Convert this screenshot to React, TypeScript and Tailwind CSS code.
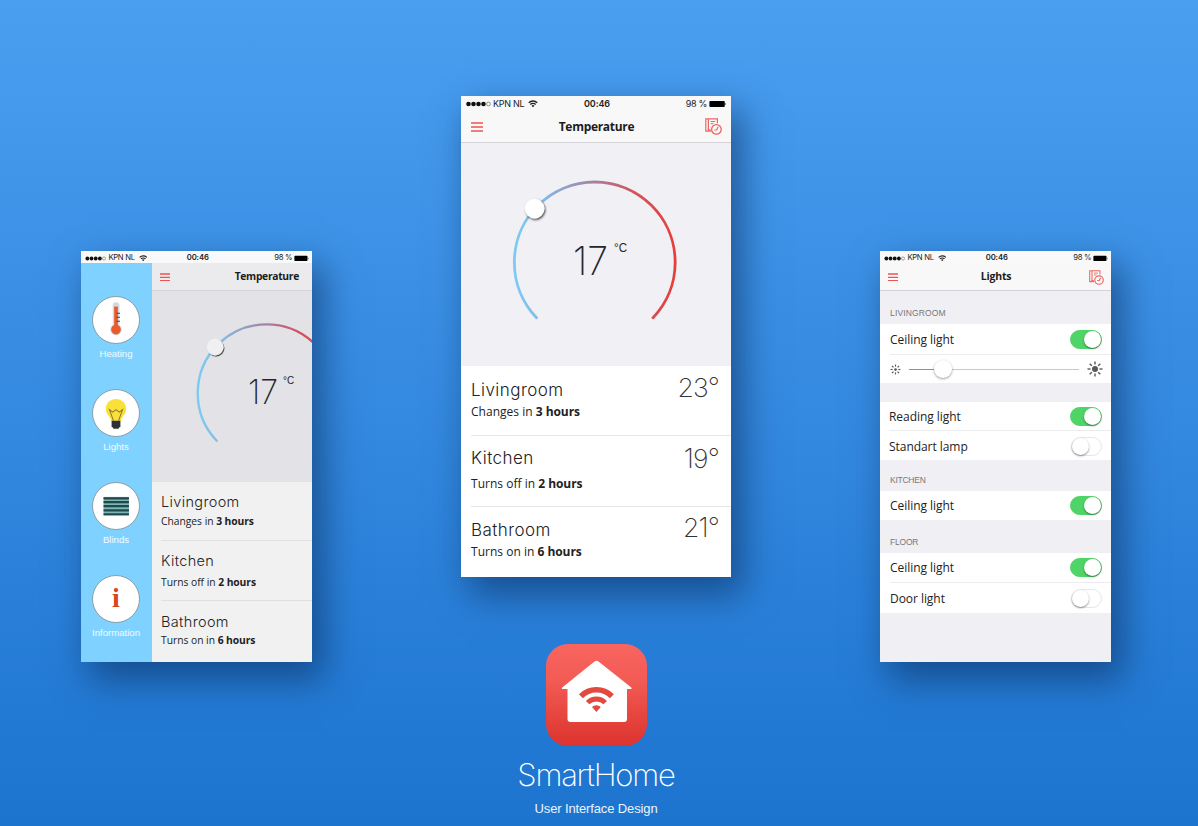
import React from "react";

const ui = "font-[Inter,'Liberation_Sans',sans-serif]";
const humanist = "font-['Open_Sans','Noto_Sans',sans-serif]";

function Wifi({ className }: { className: string }) {
  return (
    <svg viewBox="0 0 20 15" className={className} fill="none" stroke="#222">
      <path d="M1.5 5.5a12 12 0 0 1 17 0" strokeWidth="2.6" />
      <path d="M4.6 9a7.6 7.6 0 0 1 10.8 0" strokeWidth="2.6" />
      <path d="M10 14.5 7 11.3a4.3 4.3 0 0 1 6 0Z" fill="#222" stroke="none" />
    </svg>
  );
}

function StatusBar({ large = false }: { large?: boolean }) {
  return (
    <div
      className={`${ui} grid shrink-0 grid-cols-[1fr_auto_1fr] items-center text-[#222] ${
        large
          ? "h-[15px] pr-[4px] pl-[5px] text-[9px] leading-[15px]"
          : "h-[12px] bg-[#f9f9fa] pt-[2px] pr-[3px] pl-[4px] text-[7.7px] leading-[10px]"
      }`}
    >
      <div className="flex items-center">
        <svg viewBox="0 0 25 6" className={large ? "h-[6px] w-[25px]" : "h-[5px] w-[21.4px]"}>
          {[2.5, 7.5, 12.5, 17.5].map((x) => (
            <circle key={x} cx={x} cy="3" r="2.3" fill="#111" />
          ))}
          <circle cx="22.5" cy="3" r="1.9" fill="none" stroke="#555" strokeWidth=".6" />
        </svg>
        <span className={large ? "ml-[2px] tracking-[-0.3px]" : "ml-[2px] tracking-[-0.3px]"}>KPN NL</span>
        <Wifi className={large ? "ml-[4px] h-[7.5px] w-[10px]" : "ml-[4px] h-[6.5px] w-[8.5px]"} />
      </div>
      <span className={large ? "pl-[1px] font-semibold tracking-[-0.1px]" : "pl-[1.5px] font-semibold tracking-[-0.1px]"}>
        00:46
      </span>
      <div className="flex items-center justify-end">
        <span className={large ? "mr-[2px] tracking-[-0.3px]" : "mr-[1.5px] tracking-[-0.35px]"}>98 %</span>
        <svg viewBox="0 0 18 8" className={large ? "h-[8px] w-[18px]" : "h-[6.8px] w-[15.4px]"}>
          <rect x=".4" y=".9" width="15.4" height="6.2" rx="1" fill="#000" />
          <path d="M16.3 2.8q1.3 1.2 0 2.4Z" fill="#000" />
        </svg>
      </div>
    </div>
  );
}

function MenuIcon({ className }: { className: string }) {
  return (
    <svg viewBox="0 0 12 10" className={className} stroke="#ee5350" strokeWidth="1.6">
      <path d="M0 1h12M0 5h12M0 9h12" />
    </svg>
  );
}

function ScheduleIcon({ className }: { className: string }) {
  return (
    <svg viewBox="0 0 17 17" className={className} fill="none" stroke="#ec6661" strokeWidth="1.2">
      <path d="M6 13.200H4.800v-1.400H3.400v1.400H.8V.8h11.600v4.400" />
      <path d="M3.400 1v11" />
      <path d="M5.600 3.500h4.600M5.600 5.700h3" strokeWidth="1" />
      <circle cx="11.400" cy="11.400" r="4.800" strokeWidth="1.300" />
      <path d="M13.200 8.800l-1.600 3.200H9.300" />
    </svg>
  );
}

function NavBar({ title, large = false }: { title: string; large?: boolean }) {
  return (
    <div
      className={`grid shrink-0 grid-cols-[1fr_auto_1fr] items-center border-b border-[#d4d4d8] ${
        large ? "h-[32px] pr-[9px] pl-[10px]" : "h-[28px] bg-[#f8f8f9] pt-[1px] pr-[7px] pl-[8px]"
      }`}
    >
      <MenuIcon className={large ? "h-[10px] w-[12px]" : "h-[8.6px] w-[10px]"} />
      <span
        className={`${humanist} font-bold text-[#1c1c1c] ${
          large ? "text-[12px] tracking-[-0.3px]" : "text-[10.5px] tracking-[-0.2px]"
        }`}
      >
        {title}
      </span>
      <ScheduleIcon className={large ? "h-[17px] w-[17px] justify-self-end" : "h-[15px] w-[15px] justify-self-end"} />
    </div>
  );
}

function Dial({ id, viewBox, className, light }: { id: string; viewBox: string; className: string; light: string }) {
  return (
    <svg viewBox={viewBox} className={`block shrink-0 ${className}`}>
      <defs>
        <linearGradient id={`${id}-arc`} gradientUnits="userSpaceOnUse" x1="53" y1="0" x2="215" y2="0">
          <stop offset="0" stopColor="#7ccbf2" />
          <stop offset=".18" stopColor="#83b8e6" />
          <stop offset=".5" stopColor="#a87f9f" />
          <stop offset=".72" stopColor="#d25560" />
          <stop offset="1" stopColor="#e53f3b" />
        </linearGradient>
        <filter id={`${id}-knob`} x="-50%" y="-50%" width="200%" height="200%">
          <feDropShadow dx="1" dy="1.3" stdDeviation=".9" floodColor="#000" floodOpacity=".75" />
        </filter>
      </defs>
      <path
        d="M75.5 174.800A80.4 80.4 0 1 1 192 174.800"
        fill="none"
        stroke={`url(#${id}-arc)`}
        strokeWidth="2.8"
        strokeLinecap="round"
      />
      <circle cx="73.6" cy="65.6" r="9.8" fill={light} filter={`url(#${id}-knob)`} />
      <g fill="#26262a">
        <text
          x="112"
          y="132"
          fontFamily="Inter, sans-serif"
          fontSize="40"
          fontWeight="200"
          textLength="35"
          lengthAdjust="spacingAndGlyphs"
        >
          17
        </text>
        <text
          x="153"
          y="108.500"
          fontFamily="'Liberation Sans', sans-serif"
          fontSize="12.500"
          textLength="13"
          lengthAdjust="spacingAndGlyphs"
        >
          °C
        </text>
      </g>
    </svg>
  );
}

const rooms = [
  { name: "Livingroom", action: "Changes in", time: "3 hours", temp: "23°" },
  { name: "Kitchen", action: "Turns off in", time: "2 hours", temp: "19°" },
  { name: "Bathroom", action: "Turns on in", time: "6 hours", temp: "21°" },
];

const largeRows = ["h-[70px] pt-[12px]", "h-[71px] pt-[10px]", "h-[70px] pt-[11px]"];
const largeGaps = ["mt-0", "mt-[4px]", "mt-0"];
const largeTemps = ["-mt-[6px]", "-mt-[3px]", "-mt-[6px]"];
const smallRows = ["h-[59px] pt-[10px]", "h-[60px] pt-[10px]", "h-[60px] pt-[11px]"];
const smallGaps = ["mt-[1px]", "mt-[3px]", "mt-0"];

function LargeRooms() {
  return (
    <div className="flex-1 bg-white pl-[10px]">
      {rooms.map((r, i) => (
        <div
          key={r.name}
          className={`flex justify-between pr-[12px] ${largeRows[i]} ${i < 2 ? "border-b border-[#e6e6e8]" : ""}`}
        >
          <div className="whitespace-nowrap">
            <div className={`${ui} text-[17px] leading-[24px] font-light tracking-[0.45px] text-[#222]`}>{r.name}</div>
            <div className={`${humanist} text-[12px] leading-[20px] tracking-[0.02px] text-[#222] ${largeGaps[i]}`}>
              {r.action} <b className="tracking-[-0.05px]">{r.time}</b>
            </div>
          </div>
          <div className={`${ui} text-[26.5px] leading-[30px] font-extralight tracking-[-0.8px] text-[#333] ${largeTemps[i]}`}>
            {r.temp}
          </div>
        </div>
      ))}
    </div>
  );
}

function SmallRooms() {
  return (
    <div className="flex-1 bg-[#f1f1f1] pl-[9px]">
      {rooms.map((r, i) => (
        <div
          key={r.name}
          className={`whitespace-nowrap ${smallRows[i]} ${i < 2 ? "border-b border-[#dfdfe1]" : ""}`}
        >
          <div className={`${ui} text-[14.5px] leading-[20px] font-light tracking-[0.35px] text-[#222]`}>{r.name}</div>
          <div className={`${humanist} text-[10.3px] leading-[17px] tracking-[-0.02px] text-[#222] ${smallGaps[i]}`}>
            {r.action} <b className="tracking-[-0.08px]">{r.time}</b>
          </div>
        </div>
      ))}
    </div>
  );
}

function Thermometer() {
  return (
    <svg viewBox="0 0 48 48" className="size-[46px]">
      <rect x="20.6" y="5.500" width="7" height="28" rx="3.5" fill="#d3d9da" />
      <circle cx="24" cy="34" r="6" fill="#d3d9da" />
      <rect x="22.1" y="10" width="3.8" height="24" fill="#ea5a2c" />
      <circle cx="24" cy="34" r="5" fill="#ea5a2c" />
      <path d="M24.5 17H28.200M24.5 21.200H28.200M24.5 25.400H28.200" stroke="#444" strokeWidth="1.100" />
    </svg>
  );
}

function Bulb() {
  return (
    <svg viewBox="0 0 48 48" className="size-[46px]">
      <path d="M24 9.500c-6.200 0-10.600 4.400-10.600 10.200 0 6 4.600 7.200 5.400 12.600h10.400c.8-5.400 5.400-6.600 5.400-12.600C34.600 13.900 30.200 9.500 24 9.500Z" fill="#fbe03a" />
      <path d="M21.300 32 17.200 20.500l3.500 2.600 3.300-2.600 3.300 2.600 3.500-2.600-4.100 11.500" fill="none" stroke="#8b7a31" strokeWidth="1.100" />
      <path d="M19.400 32.200h9.200v5.500l-2.200 2.800h-4.800l-2.200-2.800Z" fill="#2f3136" />
    </svg>
  );
}

function Blinds() {
  return (
    <svg viewBox="0 0 48 48" className="size-[46px]">
      <rect x="11" y="14.500" width="26.500" height="19.500" fill="#7fb5b3" />
      <path d="M11 16h26.500M11 20h26.500M11 24.200h26.500M11 28.500h26.500M11 32.600h26.500" stroke="#1e4a4e" strokeWidth="2.300" />
    </svg>
  );
}

function Info() {
  return <span className="pb-[2px] font-['Liberation_Serif',serif] text-[28px] leading-[44px] font-bold text-[#d9451f]">i</span>;
}

const menu = [
  { label: "Heating", icon: <Thermometer /> },
  { label: "Lights", icon: <Bulb /> },
  { label: "Blinds", icon: <Blinds /> },
  { label: "Information", icon: <Info /> },
];

function MenuPhone() {
  return (
    <section className="mt-[251px] flex h-[411px] w-[231px] flex-col shadow-[10px_16px_34px_2px_rgba(8,38,84,0.55)]">
      <StatusBar />
      <div className="flex min-h-0 flex-1">
        <nav className="flex w-[71px] flex-col items-center bg-[#7fd2ff] pt-[33px] pr-[1px]">
          {menu.map((m) => (
            <div key={m.label} className="flex h-[93px] shrink-0 flex-col items-center">
              <div className="flex size-[48px] shrink-0 items-center justify-center overflow-hidden rounded-full border border-[#8b9da8] bg-white">
                {m.icon}
              </div>
              <span className="mt-[4px] font-['Liberation_Sans',sans-serif] text-[9.6px] leading-[12px] text-white/90">
                {m.label}
              </span>
            </div>
          ))}
        </nav>
        <div className="flex flex-1 flex-col overflow-hidden">
          <div className="flex h-[28px] shrink-0 items-center justify-between border-b border-[#d5d5d9] bg-[#ebebed] pt-[1px] pr-[13px] pl-[8px]">
            <MenuIcon className="h-[8.6px] w-[10px]" />
            <span className={`${humanist} text-[10.3px] font-bold tracking-[-0.3px] text-[#1c1c1c]`}>Temperature</span>
          </div>
          <div className="bg-[#e3e3e7]">
            <Dial id="side" viewBox="0 0 186.700 223" className="h-[191px] w-[160px]" light="#f0f0f1" />
          </div>
          <SmallRooms />
        </div>
      </div>
    </section>
  );
}

function TemperaturePhone() {
  return (
    <section className="flex h-[481px] w-[270px] flex-col shadow-[10px_16px_34px_2px_rgba(8,38,84,0.55)]">
      <div className="bg-[#f8f8f9]">
        <StatusBar large />
        <NavBar title="Temperature" large />
      </div>
      <div className="bg-[#f0f0f5]">
        <Dial id="main" viewBox="0 0 270 223" className="h-[223px] w-[270px]" light="#fff" />
      </div>
      <LargeRooms />
    </section>
  );
}

function Toggle({ on }: { on: boolean }) {
  return (
    <span
      className={`flex h-[19px] items-center rounded-full border ${
        on ? "w-[32px] justify-end border-[#4fd467] bg-[#4fd467]" : "w-[31px] justify-start border-[#e6e6e8] bg-white"
      }`}
    >
      <span className="size-[17px] rounded-full bg-white shadow-[0_1px_2px_rgba(0,0,0,0.45)]" />
    </span>
  );
}

function Sun({ className, core, dotted }: { className: string; core: number; dotted?: boolean }) {
  return (
    <svg viewBox="0 0 16 16" className={className} stroke="#5a5a5a" fill="#5a5a5a">
      <circle cx="8" cy="8" r={core} stroke="none" />
      {[0, 45, 90, 135, 180, 225, 270, 315].map((a) => (
        <path
          key={a}
          d={dotted ? "M8 3.800V.8" : "M8 3.500V.5"}
          strokeWidth={dotted ? 1.7 : 1.4}
          transform={`rotate(${a} 8 8)`}
        />
      ))}
    </svg>
  );
}

function SectionTitle({ children, className }: { children: string; className: string }) {
  return (
    <h3
      className={`flex items-end pl-[10px] font-['Liberation_Sans',sans-serif] text-[8.500px] leading-[12px] text-[#77777c] ${className}`}
    >
      {children}
    </h3>
  );
}

function LightRow({ name, on, className }: { name: string; on: boolean; className: string }) {
  return (
    <div className={`flex items-center justify-between pr-[9px] ${className}`}>
      <span className={`${humanist} pt-[1px] text-[12px] font-medium tracking-[-0.050px] text-[#222]`}>{name}</span>
      <Toggle on={on} />
    </div>
  );
}

function LightsPhone() {
  return (
    <section className="mt-[251px] flex h-[411px] w-[231px] flex-col bg-[#efeff4] shadow-[10px_16px_34px_2px_rgba(8,38,84,0.55)]">
      <StatusBar />
      <NavBar title="Lights" />
      <SectionTitle className="h-[33px] pb-[5px] tracking-[0.150px]">LIVINGROOM</SectionTitle>
      <div className="h-[59px] bg-white pl-[10px]">
        <LightRow name="Ceiling light" on className="h-[31px] border-b border-[#ececef]" />
        <div className="flex h-[28px] items-center pr-[8px]">
          <Sun className="size-[11px]" core={2} dotted />
          <div className="relative mx-[8px] h-[1px] flex-1 bg-[#c9c9cd]">
            <div className="h-[1px] w-[30px] bg-[#58a6d0]" />
            <span className="absolute top-[-9px] left-[25px] size-[18px] rounded-full bg-white shadow-[0_1px_2.500px_rgba(0,0,0,0.4)]" />
          </div>
          <Sun className="size-[16px]" core={3} />
        </div>
      </div>
      <div className="mt-[19px] h-[58px] bg-white pl-[9px]">
        <LightRow name="Reading light" on className="h-[29px] border-b border-[#ececef]" />
        <LightRow name="Standart lamp" on={false} className="h-[30px]" />
      </div>
      <SectionTitle className="h-[31px] pb-[5px] tracking-[-0.250px]">KITCHEN</SectionTitle>
      <div className="h-[29px] bg-white pl-[10px]">
        <LightRow name="Ceiling light" on className="h-[29px]" />
      </div>
      <SectionTitle className="h-[33px] pb-[5px] tracking-[-0.200px]">FLOOR</SectionTitle>
      <div className="h-[60px] bg-white pl-[10px]">
        <LightRow name="Ceiling light" on className="h-[30px] border-b border-[#ececef]" />
        <LightRow name="Door light" on={false} className="h-[31px]" />
      </div>
    </section>
  );
}

function Brand() {
  return (
    <div className="mt-[67px] flex flex-col items-center">
      <svg viewBox="0 0 101 102" className="h-[102px] w-[101px]">
        <defs>
          <linearGradient id="brand" x1="0" y1="0" x2="0" y2="1">
            <stop offset="0" stopColor="#f9655f" />
            <stop offset=".35" stopColor="#f35b55" />
            <stop offset="1" stopColor="#dc332d" />
          </linearGradient>
        </defs>
        <rect width="101" height="102" rx="22" fill="url(#brand)" />
        <path
          d="M48.500 17.500q2-1.600 4 0L85 43.200q1.500 1.800-.500 1.800H81V75q0 3-3 3H24.500q-3 0-3-3V45H17q-2 0-.500-1.800Z"
          fill="#fff"
        />
        <g fill="none" stroke="#e2493f">
          <path d="M34.900 52.200a22 22 0 0 1 31 0" strokeWidth="5.600" />
          <path d="M41.600 58.600a12.500 12.500 0 0 1 17.600 0" strokeWidth="4.800" />
        </g>
        <path d="M50.400 68 46 63a6.400 6.400 0 0 1 8.800 0Z" fill="#e2493f" />
      </svg>
      <h1 className={`${ui} mt-[9px] text-[31px] leading-[40px] font-extralight tracking-[-1.200px] text-white`}>
        SmartHome
      </h1>
      <p className="mt-[5px] font-['Liberation_Sans',sans-serif] text-[13px] leading-[18px] tracking-[-0.130px] text-[#eaf4ff]">
        User Interface Design
      </p>
    </div>
  );
}

export default function App() {
  return (
    <main className="flex h-[826px] w-[1198px] items-start gap-[149px] overflow-hidden bg-linear-to-b from-[#4a9ff1] to-[#1c74cf] pl-[81px]">
      <MenuPhone />
      <div className="flex flex-col pt-[96px]">
        <TemperaturePhone />
        <Brand />
      </div>
      <LightsPhone />
    </main>
  );
}
